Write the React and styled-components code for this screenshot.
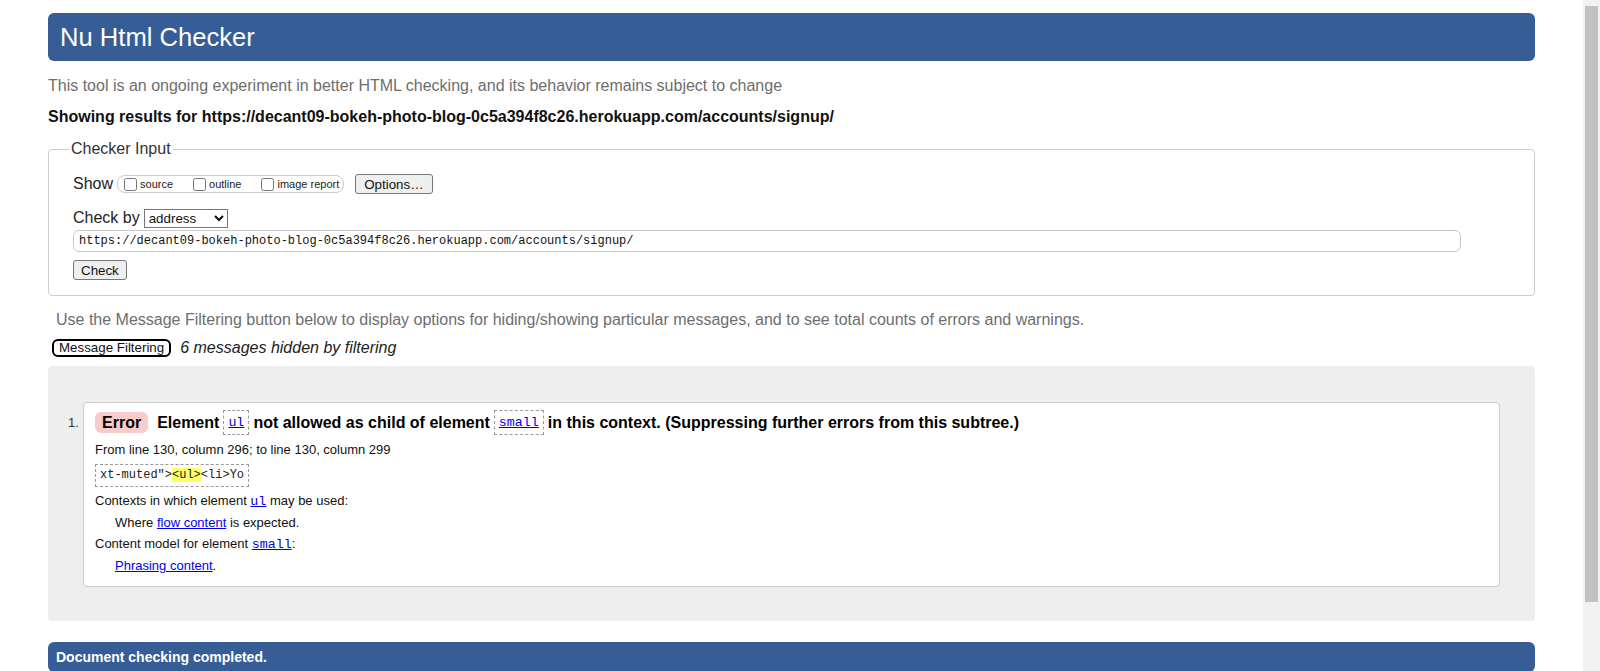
import React from 'react';
import styled, {createGlobalStyle} from "styled-components";

const GlobalStyle = createGlobalStyle`
  html, body {
    margin: 0;
    padding: 0;
    background: #fff;
  }
  body {
    font-family: "Liberation Sans", Arial, sans-serif;
    color: #111;
  }
`

const App = () => {

    const url = "https://decant09-bokeh-photo-blog-0c5a394f8c26.herokuapp.com/accounts/signup/"

    const showOptions = [
        {id: "source", label: "source"},
        {id: "outline", label: "outline"},
        {id: "image", label: "image report"}
    ]

    return (
        <Page>
            <GlobalStyle/>
            <Main>
                <Title>Nu Html Checker</Title>
                <Intro>This tool is an ongoing experiment in better HTML checking, and its behavior remains subject to change</Intro>
                <ResultsFor>Showing results for {url}</ResultsFor>

                <Fieldset>
                    <Legend>Checker Input</Legend>
                    <Row>
                        <Label>Show</Label>
                        <OptionGroup>
                            {showOptions.map((opt) => (
                                <OptionLabel key={opt.id}>
                                    <input type="checkbox"/>
                                    {opt.label}
                                </OptionLabel>
                            ))}
                        </OptionGroup>
                        <SmallButton $wide>Options…</SmallButton>
                    </Row>
                    <Row $top={14}>
                        <Label>Check by</Label>
                        <Select defaultValue="address">
                            <option value="address">address</option>
                            <option value="file">file upload</option>
                            <option value="text">text input</option>
                        </Select>
                    </Row>
                    <UrlInput type="text" defaultValue={url}/>
                    <Row $top={8}>
                        <SmallButton>Check</SmallButton>
                    </Row>
                </Fieldset>

                <Note>Use the Message Filtering button below to display options for hiding/showing particular messages, and to see total counts of errors and warnings.</Note>
                <FilterRow>
                    <FilterButton>Message Filtering</FilterButton>
                    <HiddenCount>6 messages hidden by filtering</HiddenCount>
                </FilterRow>

                <Results>
                    <ResultItem>
                        <ItemNumber>1.</ItemNumber>
                        <Card>
                            <MessageLine>
                                <Badge>Error</Badge>
                                <span>Element</span>
                                <CodeBox><CodeLink href="#">ul</CodeLink></CodeBox>
                                <span>not allowed as child of element</span>
                                <CodeBox><CodeLink href="#">small</CodeLink></CodeBox>
                                <span>in this context. (Suppressing further errors from this subtree.)</span>
                            </MessageLine>
                            <Location>From line 130, column 296; to line 130, column 299</Location>
                            <Extract>xt-muted"&gt;<Mark>&lt;ul&gt;</Mark>&lt;li&gt;Yo</Extract>
                            <Detail $first>Contexts in which element <CodeLink href="#">ul</CodeLink> may be used:</Detail>
                            <Detail $indent>Where <Link href="#">flow content</Link> is expected.</Detail>
                            <Detail>Content model for element <CodeLink href="#">small</CodeLink>:</Detail>
                            <Detail $indent><Link href="#">Phrasing content</Link>.</Detail>
                        </Card>
                    </ResultItem>
                </Results>

                <Footer>Document checking completed.</Footer>
            </Main>
            <ScrollTrack>
                <ScrollThumb/>
            </ScrollTrack>
        </Page>
    )
}
export default App;

export const Page = styled.div`
  display: flex;
  height: 100vh;
  overflow: hidden;
`

export const Main = styled.main`
  flex: 1;
  min-width: 0;
  display: flex;
  flex-direction: column;
  padding: 0 48px;
  overflow: hidden;
`

export const ScrollTrack = styled.div`
  width: 17px;
  flex-shrink: 0;
  background: #f1f1f1;
  padding: 6px 2px 0 2px;
  box-sizing: border-box;
`

export const ScrollThumb = styled.div`
  height: 596px;
  background: #c1c1c1;
`

export const Title = styled.h1`
  margin: 13px 0 0;
  height: 48px;
  box-sizing: border-box;
  padding: 0 12px;
  display: flex;
  align-items: center;
  background: #365d95;
  color: #fff;
  font-size: 25.6px;
  font-weight: normal;
  border-radius: 6px;
  flex-shrink: 0;
`

export const Intro = styled.p`
  margin: 16px 0 0;
  font-size: 16px;
  line-height: 18px;
  color: #6e6e6e;
`

export const ResultsFor = styled.p`
  margin: 13px 0 0;
  font-size: 16px;
  line-height: 18px;
  font-weight: bold;
  color: #111;
`

export const Fieldset = styled.fieldset`
  margin: 14px 0 0;
  padding: 16px 24px 15px;
  border: 1px solid #ccc;
  border-radius: 4px;
  min-width: 0;
  flex-shrink: 0;
`

export const Legend = styled.legend`
  padding: 0 2px;
  margin-left: -4px;
  font-size: 16px;
  line-height: 18px;
  color: #333;
`

export const Row = styled.div`
  display: flex;
  align-items: center;
  margin-top: ${(p) => p.$top || 0}px;
  height: 20px;
`

export const Label = styled.span`
  font-size: 16px;
  color: #222;
  margin-right: 4px;
`

export const OptionGroup = styled.span`
  display: inline-flex;
  align-items: center;
  height: 18px;
  box-sizing: border-box;
  border: 1px solid #ccc;
  border-radius: 8px;
  padding: 0 4px 0 2px;
  margin-right: 11px;
  gap: 16px;
`

export const OptionLabel = styled.label`
  display: inline-flex;
  align-items: center;
  font-size: 11px;
  color: #222;

  input {
    margin: 0 3px 0 4px;
    width: 13px;
    height: 13px;
  }
`

export const SmallButton = styled.button`
  font-family: "Liberation Sans", Arial, sans-serif;
  font-size: 13.33px;
  height: 20px;
  padding: 0 ${(p) => (p.$wide ? 8 : 7)}px;
  background: #efefef;
  border: 1px solid #767676;
  border-radius: 3px;
  color: #111;
`

export const Select = styled.select`
  font-family: "Liberation Sans", Arial, sans-serif;
  font-size: 13.33px;
  width: 84px;
  height: 19px;
  padding: 0;
  border: 1px solid #767676;
  border-radius: 0;
  color: #111;
  background: #fff;
`

export const UrlInput = styled.input`
  margin-top: 2px;
  width: 1388px;
  height: 22px;
  box-sizing: border-box;
  padding: 0 5px;
  border: 1px solid #c8c8c8;
  border-radius: 6px;
  font-family: "Liberation Mono", monospace;
  font-size: 12px;
  color: #111;
`

export const Note = styled.p`
  margin: 15px 0 0 8px;
  font-size: 16px;
  line-height: 18px;
  color: #6e6e6e;
`

export const FilterRow = styled.div`
  display: flex;
  align-items: center;
  gap: 9px;
  margin: 10px 0 0 4px;
  height: 18px;
`

export const FilterButton = styled.button`
  font-family: "Liberation Sans", Arial, sans-serif;
  font-size: 13.33px;
  height: 18px;
  padding: 0 5px;
  border: 2px solid #000;
  border-radius: 6px;
  background: #fff;
  color: #111;
  line-height: 12px;
`

export const HiddenCount = styled.em`
  font-size: 16px;
  color: #222;
`

export const Results = styled.ol`
  margin: 9px 0 0;
  padding: 36px 35px 34px 20px;
  list-style: none;
  background: #eee;
  border-radius: 4px;
  flex-shrink: 0;
`

export const ResultItem = styled.li`
  display: flex;
  align-items: flex-start;
`

export const ItemNumber = styled.span`
  width: 15px;
  flex-shrink: 0;
  font-size: 13px;
  line-height: 25px;
  padding-top: 8px;
  color: #333;
`

export const Card = styled.div`
  flex: 1;
  background: #fff;
  border: 1px solid #ccc;
  border-radius: 4px;
  padding: 7px 10px 10px 11px;
`

export const MessageLine = styled.div`
  display: flex;
  align-items: center;
  gap: 4px;
  height: 25px;
  font-size: 16px;
  font-weight: bold;
  color: #000;
`

export const Badge = styled.span`
  display: inline-flex;
  align-items: center;
  height: 21px;
  padding: 0 7px;
  margin-right: 5px;
  background: #f9cccc;
  border-radius: 6px;
`

export const CodeBox = styled.span`
  display: inline-flex;
  align-items: center;
  height: 25px;
  box-sizing: border-box;
  padding: 0 4px;
  border: 1px dashed #999;
  font-weight: normal;
`

export const CodeLink = styled.a`
  font-family: "Liberation Mono", monospace;
  font-size: 13.33px;
  color: #00e;
`

export const Link = styled.a`
  color: #00e;
`

export const Location = styled.div`
  margin-top: 4px;
  font-size: 13px;
  line-height: 21px;
  color: #111;
`

export const Extract = styled.div`
  align-self: flex-start;
  display: inline-block;
  margin-top: 4px;
  padding: 2px 4px;
  border: 1px dashed #999;
  font-family: "Liberation Mono", monospace;
  font-size: 12px;
  line-height: 17px;
  color: #222;
  white-space: pre;
`

export const Mark = styled.mark`
  background: #ff6;
  color: #222;
`

export const Detail = styled.div`
  margin-top: ${(p) => (p.$first ? 3 : 0)}px;
  padding-left: ${(p) => (p.$indent ? 20 : 0)}px;
  font-size: 13px;
  line-height: 21px;
  color: #111;
`

export const Footer = styled.div`
  margin-top: 21px;
  flex-shrink: 0;
  padding: 6px 8px;
  background: #365d95;
  color: #fff;
  font-size: 14px;
  font-weight: bold;
  line-height: 18px;
  border-radius: 6px;
`
